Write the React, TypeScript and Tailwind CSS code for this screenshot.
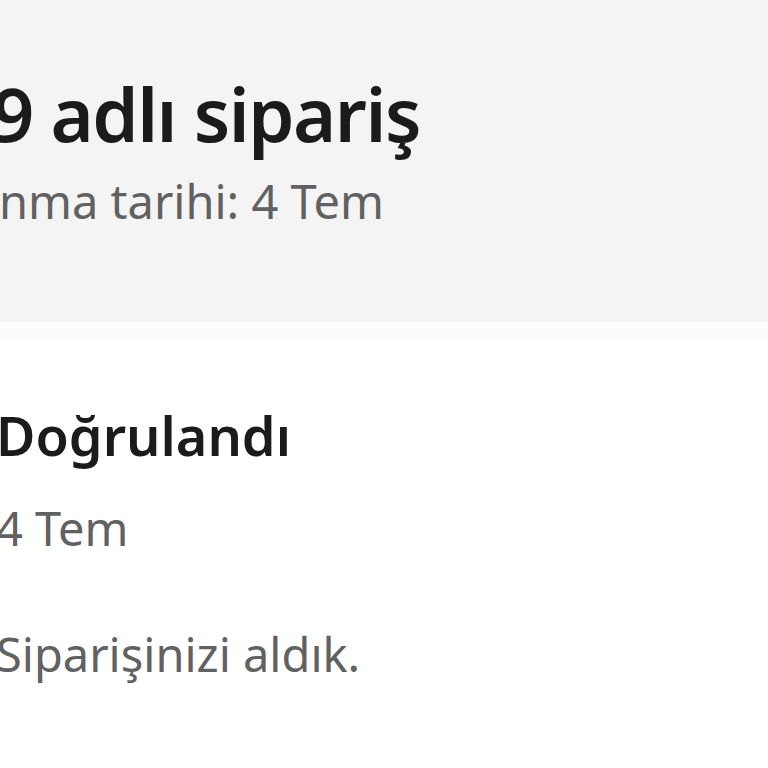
export default function App() {
  return (
    <div className="w-[768px] h-[768px] overflow-hidden bg-white font-['Noto_Sans',sans-serif]">
      <div className="h-[322px] bg-[#f4f4f4] pt-[68px] pl-0">
        <div className="-ml-[8px] text-[74px] leading-[92px] tracking-[-1.5px] font-semibold text-[#1b1b1b] whitespace-nowrap">9 adlı sipariş</div>
        <div className="mt-[13px] -ml-[1px] text-[47px] leading-[56px] text-[#616161] whitespace-nowrap">nma tarihi: 4 Tem</div>
      </div>
      <div className="h-[20px] bg-[#fcfcfc]" />
      <div className="flex flex-col -ml-[4px] pt-[59px]">
        <div className="text-[54px] leading-[68px] font-semibold text-[#1b1b1b] whitespace-nowrap">Doğrulandı</div>
        <div className="mt-[31px] text-[47px] leading-[56px] text-[#616161] whitespace-nowrap">4 Tem</div>
        <div className="mt-[70px] text-[47px] leading-[56px] text-[#616161] whitespace-nowrap">Siparişinizi aldık.</div>
      </div>
    </div>
  );
}
